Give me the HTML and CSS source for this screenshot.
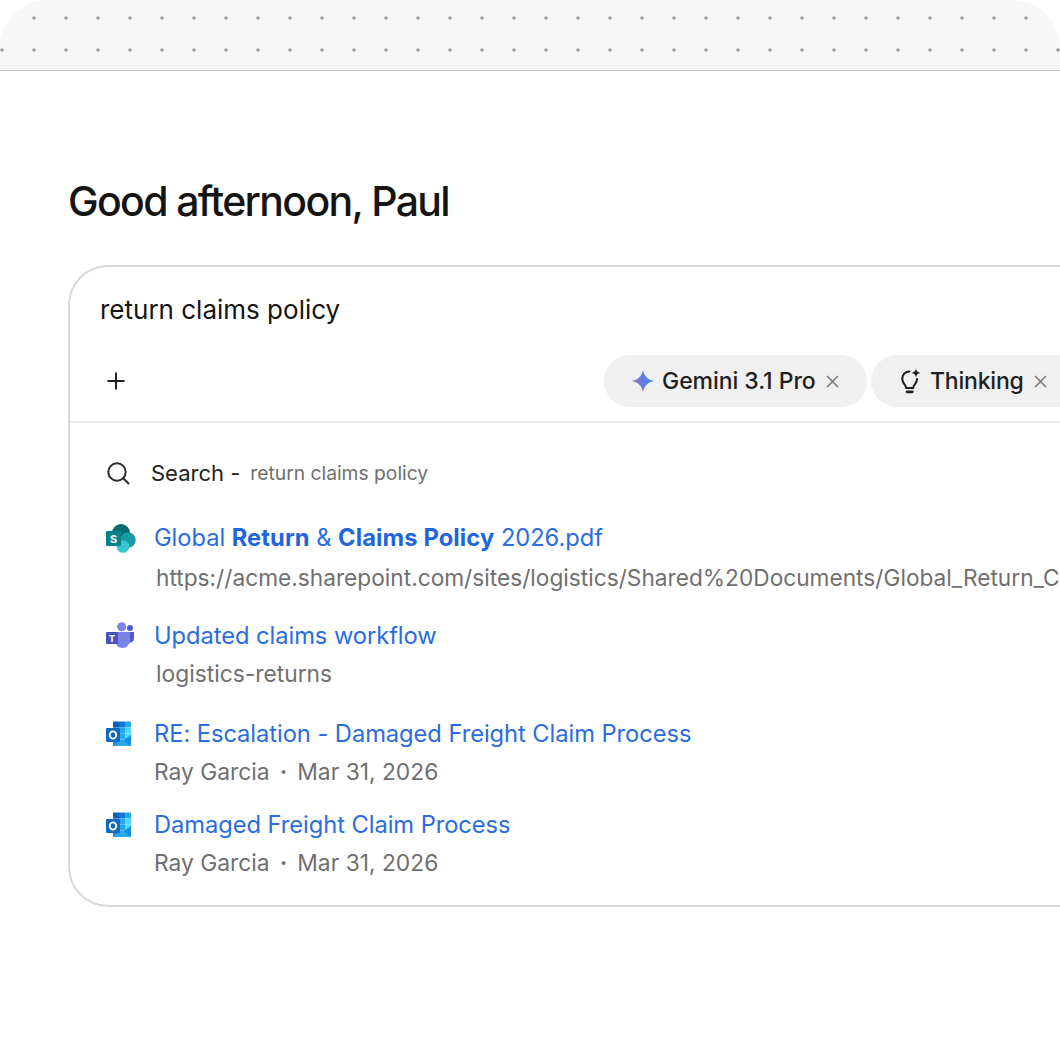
FILE: index.html
```html
<!DOCTYPE html>
<html lang="en">
<head>
<meta charset="utf-8">
<title>Search</title>
<link rel="stylesheet" href="styles.css">
</head>
<body>
<div class="page">
  <header class="topband"></header>
  <main class="main">
    <h1 class="greeting">Good afternoon, Paul</h1>
    <section class="card">
      <div class="query">return claims policy</div>
      <div class="toolbar">
        <svg class="plus" viewBox="0 0 18 18" width="18" height="18"><path d="M9 .5v17M.5 9h17" fill="none" stroke="#222" stroke-width="2"/></svg>
        <div class="chips">
          <div class="chip chip-gemini">
            <svg class="chip-icon" viewBox="0 0 24 24" width="24" height="24"><defs><linearGradient id="gem" x1="0" y1="0.6" x2="1" y2="0.4"><stop offset="0" stop-color="#a06cd0"/><stop offset="0.5" stop-color="#5f7fe0"/><stop offset="1" stop-color="#4a90e8"/></linearGradient></defs><path d="M12 0.5C12.7 6.8 17.2 11.3 23.5 12C17.2 12.7 12.7 17.2 12 23.5C11.3 17.2 6.8 12.7 0.5 12C6.8 11.3 11.3 6.8 12 0.5Z" fill="url(#gem)"/></svg>
            <span class="chip-label">Gemini 3.1 Pro</span>
            <svg class="close" viewBox="0 0 12 12" width="13" height="13"><path d="M1 1l10 10M11 1L1 11" fill="none" stroke="#6f6f6f" stroke-width="1.300"/></svg>
          </div>
          <div class="chip chip-thinking">
            <svg class="chip-icon" viewBox="0 0 24 24" width="26" height="26"><path d="M11.500 3.200C7.800 3.100 4.800 5.800 4.800 10c0 2.300 1.100 3.800 2.100 5.200.8 1 1.400 2 1.600 3.300h6.400c.2-1.300.8-2.300 1.600-3.300 1.100-1.400 2-2.900 2-5" fill="none" stroke="#1f1f1f" stroke-width="1.900" stroke-linecap="round" stroke-linejoin="round"/><path d="M9.200 22h5" fill="none" stroke="#1f1f1f" stroke-width="2.400" stroke-linecap="round"/><path d="M17.500.5c.3 2.300 1.700 3.700 4 4-2.300.3-3.700 1.700-4 4-.3-2.300-1.700-3.700-4-4 2.300-.3 3.700-1.700 4-4Z" fill="#1f1f1f"/></svg>
            <span class="chip-label chip-label-tight">Thinking</span>
            <svg class="close" viewBox="0 0 12 12" width="13" height="13"><path d="M1 1l10 10M11 1L1 11" fill="none" stroke="#6f6f6f" stroke-width="1.300"/></svg>
          </div>
        </div>
      </div>
      <div class="results">
        <div class="search-row">
          <svg class="search-icon" viewBox="0 0 24 24" width="24" height="24"><circle cx="11" cy="11" r="8.700" fill="none" stroke="#2a2a2a" stroke-width="2"/><path d="M17.300 17.300L22.500 22.500" fill="none" stroke="#2a2a2a" stroke-width="2" stroke-linecap="round"/></svg>
          <span class="search-label">Search -</span>
          <span class="search-term">return claims policy</span>
        </div>
        <div class="result result-sp">
          <div class="result-title">
            <svg class="app-icon" viewBox="0 0 32 32" width="32" height="32"><circle cx="17" cy="12" r="9" fill="#036c70"/><circle cx="24" cy="19" r="7.700" fill="#1a9ba1"/><circle cx="19" cy="25.500" r="6.300" fill="#37c6d0"/><rect x="2" y="10" width="15" height="15" rx="1" fill="#038387"/><text x="9.500" y="21.800" class="icon-letter">S</text></svg>
            <a class="link">Global <b>Return</b> &amp; <b>Claims Policy</b> 2026.pdf</a>
          </div>
          <div class="result-sub url">https://acme.sharepoint.com/sites/logistics/Shared%20Documents/Global_Return_Claims_Policy_2026.pdf</div>
        </div>
        <div class="result result-teams">
          <div class="result-title">
            <svg class="app-icon" viewBox="0 0 32 32" width="32" height="32"><circle cx="26" cy="9" r="3" fill="#5059c9"/><path d="M24 13h6v6.500a4.500 4.500 0 0 1-6 4z" fill="#5059c9"/><circle cx="17.700" cy="7.700" r="4.500" fill="#7b83eb"/><path d="M11 13h15v8.500a7.500 7.500 0 0 1-15 0z" fill="#7b83eb"/><rect x="2" y="13" width="12" height="12" rx="1" fill="#4b53bc"/><text x="8" y="22.500" class="icon-letter icon-letter-sm">T</text></svg>
            <a class="link">Updated claims workflow</a>
          </div>
          <div class="result-sub indent">logistics-returns</div>
        </div>
        <div class="result result-mail1">
          <div class="result-title">
            <svg class="app-icon" viewBox="0 0 32 32" width="32" height="32"><defs><g id="outlook"><rect x="9" y="4.500" width="6" height="6" fill="#0364b8"/><rect x="15" y="4.500" width="6" height="6" fill="#0f78d4"/><rect x="21" y="4.500" width="6" height="6" fill="#28a8ea"/><rect x="9" y="10.500" width="6" height="6" fill="#0f78d4"/><rect x="15" y="10.500" width="6" height="6" fill="#28a8ea"/><rect x="21" y="10.500" width="6" height="6" fill="#50d9ff"/><rect x="9" y="16.500" width="6" height="6" fill="#0f78d4"/><rect x="15" y="16.500" width="6" height="6" fill="#28a8ea"/><rect x="21" y="16.500" width="6" height="6" fill="#50d9ff"/><path d="M9 18l9 6 9-6v11H9z" fill="#1490df"/><path d="M9 29l9-7 9 7z" fill="#28a8ea"/><rect x="2" y="11" width="14" height="14" rx="1" fill="#0f6cbd"/><ellipse cx="9" cy="18" rx="3.200" ry="3.700" fill="none" stroke="#fff" stroke-width="1.800"/></g></defs><use href="#outlook"/></svg>
            <a class="link">RE: Escalation - Damaged Freight Claim Process</a>
          </div>
          <div class="result-sub">Ray Garcia<span class="sep">·</span>Mar 31, 2026</div>
        </div>
        <div class="result result-mail2">
          <div class="result-title">
            <svg class="app-icon" viewBox="0 0 32 32" width="32" height="32"><use href="#outlook"/></svg>
            <a class="link">Damaged Freight Claim Process</a>
          </div>
          <div class="result-sub">Ray Garcia<span class="sep">·</span>Mar 31, 2026</div>
        </div>
      </div>
    </section>
  </main>
</div>
</body>
</html>
```
FILE: styles.css
```css
* { box-sizing: border-box; }
html, body { margin: 0; padding: 0; background: #fff; }
body { font-family: Inter, "Liberation Sans", sans-serif; color: #1f1f1f; }
.page { width: 1060px; height: 1060px; overflow: hidden; background: #fff; }
.topband {
  height: 71px;
  background-color: #f7f7f7;
  background-image: radial-gradient(circle at center, #9c9c9c 0, #9c9c9c 1.300px, transparent 2.100px);
  background-size: 32px 32px;
  background-position: -14px 2px;
  border-bottom: 1px solid #c9c9c9;
  border-radius: 48px 48px 0 0;
}
.main { padding: 0 0 0 68px; }
.greeting {
  margin: 106px 0 0;
  font-size: 41px;
  line-height: 48px;
  font-weight: 500;
  letter-spacing: -1.650px;
  color: #141414;
}
.card {
  margin-top: 40px;
  width: 1120px;
  height: 642px;
  border: 2px solid #d9d9d9;
  border-right: 0;
  border-radius: 40px;
  background: #fff;
}
.query { padding: 27px 0 0 30px; font-size: 26px; line-height: 32px; color: #141414; }
.toolbar {
  display: flex;
  align-items: center;
  height: 97px;
  padding: 15px 0 0 37px;
  border-bottom: 2px solid #ececec;
}
.plus { flex: none; }
.chips { display: flex; gap: 4px; margin-left: 479px; }
.chip {
  display: flex;
  align-items: center;
  height: 52px;
  border-radius: 26px;
  background: #f0f0f0;
  font-size: 23px;
  font-weight: 500;
  color: #1f1f1f;
  white-space: nowrap;
}
.chip-gemini { width: 263px; padding-left: 27px; }
.chip-thinking { width: 230px; padding-left: 26px; }
.chip-label { margin-left: 7px; letter-spacing: -.05px; }
.chip-label-tight { margin-left: 7px; letter-spacing: -.2px; }
.close { margin-left: 10px; flex: none; }
.results { padding-top: 35px; }
.search-row { display: flex; align-items: center; height: 30px; padding-left: 36px; }
.search-label { margin-left: 21px; font-size: 22px; font-weight: 400; color: #222; }
.search-term { margin-left: 10px; font-size: 19.250px; color: #6f6f6f; }
.result-title { display: flex; align-items: center; height: 32px; padding-left: 34px; }
.app-icon { flex: none; }
.link { margin-left: 18px; font-size: 23.700px; color: #2a6de0; white-space: nowrap; letter-spacing: -.05px; }
.link b { font-weight: 700; color: #1f66de; letter-spacing: .1px; }
.result-sub { margin: 7px 0 0 84px; font-size: 22.800px; line-height: 32px; color: #6f6f6f; white-space: nowrap; }
.url { margin: 9px 0 0 86px; font-size: 22.700px; }
.indent { margin: 7px 0 0 86px; }
.sep { margin: 0 10px; font-weight: 700; }
.result-sp { margin-top: 33px; }
.result-teams { margin-top: 25px; }
.result-mail1 { margin-top: 27px; }
.result-mail2 { margin-top: 20px; }
.icon-letter { font-size: 11px; font-weight: 700; fill: #fff; text-anchor: middle; font-family: Inter, sans-serif; }
.icon-letter-sm { font-size: 9.500px; }
```
